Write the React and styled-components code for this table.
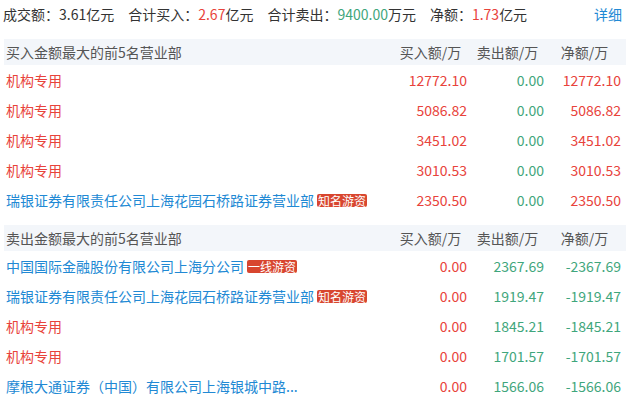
import styled, { createGlobalStyle } from "styled-components";

const GlobalStyle = createGlobalStyle`
  body {
    margin: 0;
    background: #fff;
    font-family: "Noto Sans CJK SC", "Noto Sans", sans-serif;
    color: #333;
  }
`;

const RED = "#e8433b";
const GREEN = "#3fa67c";
const BLUE = "#2189d4";

const buyList = [
  { name: "机构专用", org: true, buy: "12772.10", sell: "0.00", net: "12772.10" },
  { name: "机构专用", org: true, buy: "5086.82", sell: "0.00", net: "5086.82" },
  { name: "机构专用", org: true, buy: "3451.02", sell: "0.00", net: "3451.02" },
  { name: "机构专用", org: true, buy: "3010.53", sell: "0.00", net: "3010.53" },
  { name: "瑞银证券有限责任公司上海花园石桥路证券营业部", tag: "知名游资", buy: "2350.50", sell: "0.00", net: "2350.50" },
];

const sellList = [
  { name: "中国国际金融股份有限公司上海分公司", tag: "一线游资", buy: "0.00", sell: "2367.69", net: "-2367.69" },
  { name: "瑞银证券有限责任公司上海花园石桥路证券营业部", tag: "知名游资", buy: "0.00", sell: "1919.47", net: "-1919.47" },
  { name: "机构专用", org: true, buy: "0.00", sell: "1845.21", net: "-1845.21" },
  { name: "机构专用", org: true, buy: "0.00", sell: "1701.57", net: "-1701.57" },
  { name: "摩根大通证券（中国）有限公司上海银城中路...", buy: "0.00", sell: "1566.06", net: "-1566.06" },
];

const Wrap = styled.div`
  padding: 0 4px;
  width: 622px;
  font-size: 14px;
`;

const Summary = styled.div`
  display: flex;
  align-items: center;
  height: 28px;
  margin: 0 0 11px -1px;
  white-space: nowrap;
`;

const SumItem = styled.span`
  margin-right: 14px;
`;

const Val = styled.span`
  color: ${(p) => p.$c};
`;

const Detail = styled.a`
  margin-left: auto;
  margin-right: 4px;
  color: ${BLUE};
  text-decoration: none;
`;

const Section = styled.div`
  margin-bottom: 10px;
`;

const Row = styled.div`
  display: grid;
  grid-template-columns: 1fr 77px 77px 77px;
  align-items: center;
  padding: 0 5px 0 2px;
  height: ${(p) => (p.$head ? "26px" : "30px")};
  background: ${(p) => (p.$head ? "#f3f6fa" : "transparent")};
  color: ${(p) => (p.$head ? "#555" : "#333")};
  white-space: nowrap;
`;

const Name = styled.div`
  display: flex;
  align-items: center;
  color: ${(p) => (p.$org ? RED : BLUE)};
`;

const Tag = styled.span`
  margin-left: 3px;
  padding: 0 1px;
  height: 13px;
  line-height: 13px;
  font-size: 12px;
  color: #fff;
  background: #d8462f;
  border-radius: 2px;
`;

const HeadCell = styled.div`
  text-align: center;
  padding-left: 4px;
`;

const Num = styled.div`
  text-align: right;
  color: ${(p) => p.$c};
`;

function Table({ title, rows }) {
  return (
    <Section>
      <Row $head>
        <div>{title}</div>
        <HeadCell>买入额/万</HeadCell>
        <HeadCell>卖出额/万</HeadCell>
        <HeadCell>净额/万</HeadCell>
      </Row>
      {rows.map((r, i) => (
        <Row key={i}>
          <Name $org={r.org}>
            {r.name}
            {r.tag && <Tag>{r.tag}</Tag>}
          </Name>
          <Num $c={RED}>{r.buy}</Num>
          <Num $c={GREEN}>{r.sell}</Num>
          <Num $c={r.net.startsWith("-") ? GREEN : RED}>{r.net}</Num>
        </Row>
      ))}
    </Section>
  );
}

export default function App() {
  return (
    <Wrap>
      <GlobalStyle />
      <Summary>
        <SumItem>成交额：3.61亿元</SumItem>
        <SumItem>合计买入：<Val $c={RED}>2.67</Val>亿元</SumItem>
        <SumItem>合计卖出：<Val $c={GREEN}>9400.00</Val>万元</SumItem>
        <SumItem>净额：<Val $c={RED}>1.73</Val>亿元</SumItem>
        <Detail href="#">详细</Detail>
      </Summary>
      <Table title="买入金额最大的前5名营业部" rows={buyList} />
      <Table title="卖出金额最大的前5名营业部" rows={sellList} />
    </Wrap>
  );
}
